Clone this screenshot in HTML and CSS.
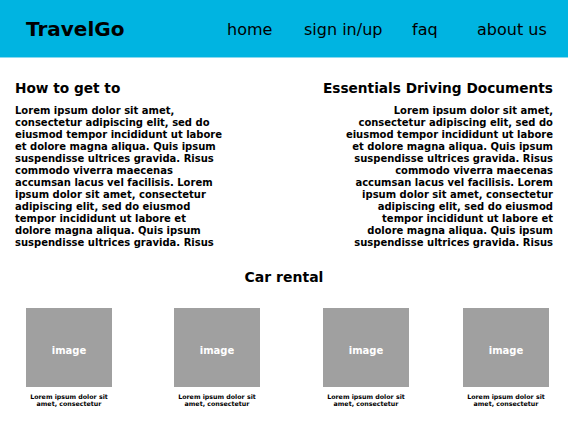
FILE: index.html
```html
<!DOCTYPE html>
<html>

<head>
    <meta charset="utf-8">
    <title>TravelGo</title>
    <link rel="stylesheet" href="styles.css">
</head>

<body>
  <header class="topbar">
    <div class="logo">TravelGo</div>
    <nav class="menu">
      <a href="#">home</a>
      <a href="#">sign in/up</a>
      <a href="#">faq</a>
      <a href="#">about us</a>
    </nav>
  </header>

  <section class="info">
    <div class="col">
      <h3>How to get to</h3>
      <p>Lorem ipsum dolor sit amet, consectetur adipiscing elit, sed do eiusmod tempor incididunt ut labore et dolore magna aliqua. Quis ipsum suspendisse ultrices gravida. Risus commodo viverra maecenas accumsan lacus vel facilisis. Lorem ipsum dolor sit amet, consectetur adipiscing elit, sed do eiusmod tempor incididunt ut labore et dolore magna aliqua. Quis ipsum suspendisse ultrices gravida. Risus</p>
    </div>
    <div class="col right">
      <h3>Essentials Driving Documents</h3>
      <p>Lorem ipsum dolor sit amet, consectetur adipiscing elit, sed do eiusmod tempor incididunt ut labore et dolore magna aliqua. Quis ipsum suspendisse ultrices gravida. Risus commodo viverra maecenas accumsan lacus vel facilisis. Lorem ipsum dolor sit amet, consectetur adipiscing elit, sed do eiusmod tempor incididunt ut labore et dolore magna aliqua. Quis ipsum suspendisse ultrices gravida. Risus</p>
    </div>
  </section>

  <section class="rental">
    <h3>Car rental</h3>
    <div class="cars">
      <div class="car">
        <div class="pic">image</div>
        <p>Lorem ipsum dolor sit<br>amet, consectetur</p>
      </div>
      <div class="car">
        <div class="pic">image</div>
        <p>Lorem ipsum dolor sit<br>amet, consectetur</p>
      </div>
      <div class="car">
        <div class="pic">image</div>
        <p>Lorem ipsum dolor sit<br>amet, consectetur</p>
      </div>
      <div class="car">
        <div class="pic">image</div>
        <p>Lorem ipsum dolor sit<br>amet, consectetur</p>
      </div>
    </div>
  </section>
</body>
</html>
```

FILE: styles.css
```css
body {
  margin: 0;
  font-family: "DejaVu Sans", Verdana, sans-serif;
  color: #000;
  background: #fff;
}

.topbar {
  display: flex;
  align-items: center;
  height: 57px;
  background-color: #00b4e1;
  border-bottom: 1px solid #8ad9ef;
}

.logo {
  width: 201px;
  padding-left: 26px;
  font-size: 20px;
  font-weight: bold;
}

.menu {
  display: grid;
  grid-template-columns: 77px 108px 65px auto;
  padding-top: 1px;
}

.menu a {
  color: #000;
  text-decoration: none;
  font-size: 16px;
}

.info {
  display: flex;
  justify-content: space-between;
  padding: 22px 15px 0 15px;
}

.col {
  width: 210px;
}

.col.right {
  width: 240px;
  text-align: right;
}

.col.right p {
  width: 208px;
  margin-left: auto;
}

h3 {
  margin: 0;
  font-size: 14px;
  font-weight: bold;
}

.info h3 {
  font-size: 13.7px;
}

.col p {
  margin-top: 9px;
  margin-bottom: 0;
  font-size: 10px;
  line-height: 12px;
  font-weight: bold;
}

.rental {
  padding-top: 20px;
}

.rental h3 {
  text-align: center;
}

.cars {
  display: grid;
  grid-template-columns: 148px 149px 140px 86px;
  padding: 23px 0 0 26px;
}

.car {
  width: 86px;
  text-align: center;
}

.pic {
  display: flex;
  align-items: center;
  justify-content: center;
  box-sizing: border-box;
  height: 79px;
  padding-top: 6px;
  background-color: #a0a0a0;
  color: #fff;
  font-size: 10px;
  font-weight: bold;
}

.car p {
  margin: 6px 0 0 0;
  font-size: 6.3px;
  line-height: 7px;
  font-weight: bold;
}
```
